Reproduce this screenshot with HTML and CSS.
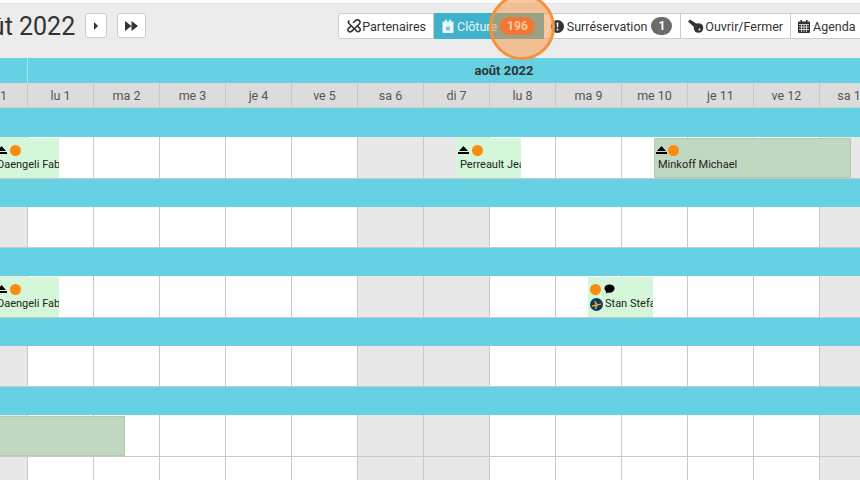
FILE: index.html
```html
<!DOCTYPE html>
<html lang="fr">
<head>
    <meta charset="UTF-8" />
    <title>Planning août 2022</title>
    <link rel="stylesheet" href="styles.css">
</head>
<body>
    <div class="toolbar">
        <h1 class="title">août 2022</h1>
        <button class="nav nav-one"><svg width="6" height="8" viewBox="0 0 6 8"><path d="M1 0l4 4-4 4z"/></svg></button>
        <button class="nav nav-two"><svg width="13" height="10" viewBox="0 0 13 10"><path d="M0 0l6.500 5L0 10zM6.500 0L13 5l-6.500 5z"/></svg></button>
        <div class="actions">
            <button class="action partners">
                <svg width="14" height="14" viewBox="0 0 14 14" fill="none" stroke="#333" stroke-width="1.600" stroke-linecap="round"><path d="M2 2a1.500 1.500 0 0 0 0 2.500L9.500 12a2 2 0 0 0 3-3l-2-2"/><path d="M6.500 3.500l2-1.800a2.500 2.500 0 0 1 3.800 3.300L4.500 12.300a2 2 0 0 1-3-3l2-1.800"/></svg>
                Partenaires
            </button>
            <button class="action closing">
                <svg width="12" height="14" viewBox="0 0 11 14"><path fill="#e8f6f9" d="M0 3.500a1 1 0 0 1 1-1h1.500V.8h1.800v1.700h2.400V.8h1.800v1.700H10a1 1 0 0 1 1 1V13a1 1 0 0 1-1 1H1a1 1 0 0 1-1-1z"/><path stroke="#3fb1cb" stroke-width="1.200" d="M3.800 7.800l3.400 3.400M7.200 7.800l-3.400 3.400"/></svg>
                Clôture
                <span class="badge badge-red">196</span>
            </button>
            <button class="action booking">
                <svg width="13" height="13" viewBox="0 0 13 13"><circle cx="6.500" cy="6.500" r="6.500" fill="#333"/><path fill="#fff" d="M5.600 2.500h1.800l-.3 5H5.900zM5.600 8.800h1.800v1.700H5.600z"/></svg>
                Surréservation
                <span class="badge badge-grey">1</span>
            </button>
            <button class="action lock">
                <svg width="16" height="14" viewBox="0 0 16 14"><path fill="#333" d="M0 2.500L2 .5l7 4.500-3 3z"/><circle cx="10.500" cy="9" r="4.800" fill="#333"/><circle cx="11.500" cy="10.500" r="1" fill="#fff"/></svg>
                Ouvrir/Fermer
            </button>
            <button class="action agenda">
                <svg width="12" height="13" viewBox="0 0 12 13"><path fill="#333" d="M2.500 0h1.500v1.500h4V0h1.500v1.500H11a1 1 0 0 1 1 1V12a1 1 0 0 1-1 1H1a1 1 0 0 1-1-1V2.500a1 1 0 0 1 1-1h1.500z"/><path stroke="#eee" stroke-width=".8" d="M1 4.500h10M1 7h10M1 9.500h10M3.500 4.500V12M6 4.500V12M8.500 4.500V12"/></svg>
                Agenda
            </button>
        </div>
    </div>

    <div class="planning">
        <div class="months">
            <div class="month month-prev"></div>
            <div class="month month-current">août 2022</div>
        </div>
        <div class="days">
            <div class="day">di 31</div>
            <div class="day">lu 1</div>
            <div class="day">ma 2</div>
            <div class="day">me 3</div>
            <div class="day">je 4</div>
            <div class="day">ve 5</div>
            <div class="day">sa 6</div>
            <div class="day">di 7</div>
            <div class="day">lu 8</div>
            <div class="day">ma 9</div>
            <div class="day">me 10</div>
            <div class="day">je 11</div>
            <div class="day">ve 12</div>
            <div class="day">sa 13</div>
        </div>

        <div class="band band-first"></div>
        <div class="row">
            <div class="cell off"></div><div class="cell"></div><div class="cell"></div><div class="cell"></div><div class="cell"></div><div class="cell"></div><div class="cell off"></div><div class="cell off"></div><div class="cell"></div><div class="cell"></div><div class="cell"></div><div class="cell"></div><div class="cell"></div><div class="cell off"></div>
            <div class="event ev-daengeli">
                <div class="event-icons"><svg class="bell" width="11" height="8" viewBox="0 0 11 8"><path d="M5.500 0L10 5H1zM0 6h11v2H0z"/></svg><span class="dot"></span></div>
                <div class="event-name">Daengeli Fabien</div>
            </div>
            <div class="event ev-perreault">
                <div class="event-icons"><svg class="bell" width="11" height="8" viewBox="0 0 11 8"><path d="M5.500 0L10 5H1zM0 6h11v2H0z"/></svg><span class="dot"></span></div>
                <div class="event-name">Perreault Jean</div>
            </div>
            <div class="event done ev-minkoff">
                <div class="event-icons"><svg class="bell" width="11" height="8" viewBox="0 0 11 8"><path d="M5.500 0L10 5H1zM0 6h11v2H0z"/></svg><span class="dot"></span></div>
                <div class="event-name">Minkoff Michael</div>
            </div>
        </div>

        <div class="band"></div>
        <div class="row">
            <div class="cell off"></div><div class="cell"></div><div class="cell"></div><div class="cell"></div><div class="cell"></div><div class="cell"></div><div class="cell off"></div><div class="cell off"></div><div class="cell"></div><div class="cell"></div><div class="cell"></div><div class="cell"></div><div class="cell"></div><div class="cell off"></div>
        </div>

        <div class="band"></div>
        <div class="row">
            <div class="cell off"></div><div class="cell"></div><div class="cell"></div><div class="cell"></div><div class="cell"></div><div class="cell"></div><div class="cell off"></div><div class="cell off"></div><div class="cell"></div><div class="cell"></div><div class="cell"></div><div class="cell"></div><div class="cell"></div><div class="cell off"></div>
            <div class="event ev-daengeli">
                <div class="event-icons"><svg class="bell" width="11" height="8" viewBox="0 0 11 8"><path d="M5.500 0L10 5H1zM0 6h11v2H0z"/></svg><span class="dot"></span></div>
                <div class="event-name">Daengeli Fabien</div>
            </div>
            <div class="event ev-stan">
                <div class="event-icons"><span class="dot"></span><svg width="11" height="10" viewBox="0 0 12 10"><ellipse cx="6" cy="4.500" rx="5.500" ry="4.500"/><path d="M2 9.800L3 6l3 2z"/></svg></div>
                <div class="event-name"><svg class="plane" width="13" height="13" viewBox="0 0 13 13"><circle cx="6.500" cy="6.500" r="6.500" fill="#12395a"/><path fill="#d9a93a" d="M1.500 7.500l4-1L4 3h1.300l2.500 3.200 3-.7c.8 0 .8 1-.1 1.200l-2.900.8L6 11H4.800l.8-2.800-3 .6z"/></svg>Stan Stefan</div>
            </div>
        </div>

        <div class="band"></div>
        <div class="row">
            <div class="cell off"></div><div class="cell"></div><div class="cell"></div><div class="cell"></div><div class="cell"></div><div class="cell"></div><div class="cell off"></div><div class="cell off"></div><div class="cell"></div><div class="cell"></div><div class="cell"></div><div class="cell"></div><div class="cell"></div><div class="cell off"></div>
        </div>

        <div class="band"></div>
        <div class="row">
            <div class="cell off"></div><div class="cell"></div><div class="cell"></div><div class="cell"></div><div class="cell"></div><div class="cell"></div><div class="cell off"></div><div class="cell off"></div><div class="cell"></div><div class="cell"></div><div class="cell"></div><div class="cell"></div><div class="cell"></div><div class="cell off"></div>
            <div class="event done ev-bottom"></div>
        </div>

        <div class="row">
            <div class="cell off"></div><div class="cell"></div><div class="cell"></div><div class="cell"></div><div class="cell"></div><div class="cell"></div><div class="cell off"></div><div class="cell off"></div><div class="cell"></div><div class="cell"></div><div class="cell"></div><div class="cell"></div><div class="cell"></div><div class="cell off"></div>
        </div>
    </div>

    <div class="spotlight"></div>
</body>
</html>
```

FILE: styles.css
```css
html, body {
    height: 480px;
    overflow: hidden;
}
body {
    margin: 0;
    background: #fff;
    font-family: 'Roboto', sans-serif;
    color: #333;
    font-size: 13px;
}
button {
    font-family: inherit;
}

/* top bar */
.toolbar {
    display: flex;
    align-items: flex-start;
    box-sizing: border-box;
    height: 55px;
    margin-top: 3px;
    padding-top: 9px;
    background: #ececec;
    border-top: 1px solid #e4e4e4;
}
.title {
    flex: none;
    margin: 0 0 0 -37px;
    font-size: 25px;
    line-height: 27px;
    font-weight: 400;
    color: #333;
    white-space: nowrap;
}
.nav {
    flex: none;
    display: flex;
    align-items: center;
    justify-content: center;
    height: 25px;
    padding: 0;
    background: #fff;
    border: 1px solid #ccc;
    border-radius: 3px;
}
.nav svg {
    fill: #333;
}
.nav-one {
    width: 22px;
    margin-left: 10px;
}
.nav-two {
    width: 29px;
    margin-left: 10px;
}
.actions {
    flex: none;
    display: flex;
    margin-left: 192px;
}
.action {
    flex: none;
    display: flex;
    align-items: center;
    gap: 3px;
    height: 26px;
    padding: 0 8px;
    background: #fff;
    border: 1px solid #ccc;
    border-left: none;
    color: #333;
    font-size: 12.5px;
    white-space: nowrap;
}
.action svg {
    flex: none;
}
.partners {
    gap: 1px;
    padding-right: 7px;
    border-left: 1px solid #ccc;
    border-radius: 3px 0 0 3px;
}
.closing {
    background: #3fb1cb;
    border-color: #3fb1cb;
    color: #eaf7fa;
}
.booking {
    padding: 0 8px 0 7px;
}
.lock {
    gap: 1px;
    padding: 0 7px;
}
.agenda {
    padding-left: 7px;
}
.badge {
    padding: 0 7px;
    height: 18px;
    line-height: 18px;
    border-radius: 9px;
    font-size: 12px;
    font-weight: 700;
    color: #fff;
}
.badge-red {
    background: #f25a2a;
}
.badge-grey {
    margin-left: 1px;
    background: #6b6b6b;
}

/* planning */
.planning {
    width: 1030px;
    margin-left: -38px;
}
.months {
    display: flex;
    height: 25px;
    background: #65d1e2;
}
.month {
    flex: none;
    font-size: 13px;
    font-weight: 700;
    line-height: 25px;
    text-align: center;
    color: #333;
}
.month-prev {
    width: 66px;
    border-right: 1px solid #a5e3ed;
    box-sizing: border-box;
}
.month-current {
    width: 952px;
}
.days,
.row {
    display: grid;
    grid-template-columns: repeat(14, 66px);
}
.days {
    height: 25px;
    background: #dcdcdc;
    border-bottom: 1px solid #c8d4d6;
    box-sizing: border-box;
    font-size: 12.5px;
}
.day {
    border-right: 1px solid #c9c9c9;
    line-height: 25px;
    text-align: center;
    color: #555;
}
.day:first-child {
    padding-right: 2px;
}
.band {
    height: 28px;
    background: #65d1e2;
}
.band-first {
    height: 29px;
}
.row {
    position: relative;
    height: 41.5px;
    background: #fff;
}
.cell {
    border-right: 1px solid #c9c9c9;
    border-bottom: 1px solid #c9c9c9;
}
.off {
    background: #e8e8e8;
}

/* reservations */
.event {
    position: absolute;
    top: 1px;
    bottom: 1px;
    overflow: hidden;
    background: #d5f7d9;
    color: #222;
    font-size: 11px;
    white-space: nowrap;
}
.done {
    background: #c1d8c0;
    box-shadow: inset 0 0 0 1px #b3c9b2;
}
.event-icons {
    display: flex;
    align-items: center;
    gap: 3px;
    height: 12px;
    margin-top: 6px;
    padding-left: 2px;
}
.event-name {
    display: flex;
    align-items: center;
    gap: 2px;
    margin-top: 2px;
    padding-left: 4px;
    line-height: 14px;
}
.event svg {
    flex: none;
}
.dot {
    flex: none;
    width: 11px;
    height: 11px;
    border-radius: 50%;
    background: #fb8c0f;
}
.ev-daengeli {
    left: 0;
    width: 97px;
}
.ev-daengeli .event-icons {
    padding-left: 34px;
}
.ev-daengeli .event-name {
    padding-left: 35px;
}
.ev-perreault {
    left: 494px;
    width: 65px;
}
.ev-minkoff {
    left: 692px;
    width: 197px;
}
.ev-minkoff .event-icons {
    gap: 1px;
}
.ev-stan {
    left: 626px;
    width: 65px;
}
.ev-stan .event-name {
    padding-left: 2px;
}
.ev-bottom {
    left: 0;
    width: 163px;
}

/* tutorial highlight over the badge */
.spotlight {
    position: absolute;
    left: 489px;
    top: -6px;
    width: 66px;
    height: 66px;
    box-sizing: border-box;
    border: 3px solid #f5923e;
    border-radius: 50%;
    background: rgba(245, 146, 62, 0.5);
}
```
